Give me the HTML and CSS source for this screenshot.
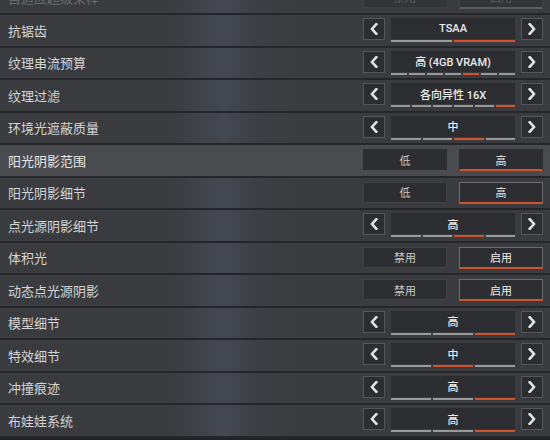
FILE: index.html
```html
<!DOCTYPE html>
<html lang="zh-CN">
<head>
  <meta charset="UTF-8" />
  <meta name="viewport" content="width=device-width, initial-scale=1.0"/>
  <title>视频设置</title>
  <link rel="stylesheet" href="styles.css">
</head>
<body>

<div class="settings">

  <div class="row disabled">
    <div class="label">自适应超级采样</div>
    <div class="toggle">
      <div class="opt">禁用</div>
      <div class="opt on">启用</div>
    </div>
  </div>

  <div class="row">
    <div class="label">抗锯齿</div>
    <div class="picker">
      <div class="arrow"><svg viewBox="0 0 8 12" width="8" height="12"><path d="M6.3 1.2 L2 6 L6.3 10.8"/></svg></div>
      <div class="value">
        <div class="value-text">TSAA</div>
        <div class="ticks"><span></span><span class="on"></span></div>
      </div>
      <div class="arrow"><svg viewBox="0 0 8 12" width="8" height="12"><path d="M1.7 1.2 L6 6 L1.7 10.8"/></svg></div>
    </div>
  </div>

  <div class="row">
    <div class="label">纹理串流预算</div>
    <div class="picker">
      <div class="arrow"><svg viewBox="0 0 8 12" width="8" height="12"><path d="M6.3 1.2 L2 6 L6.3 10.8"/></svg></div>
      <div class="value">
        <div class="value-text">高 (4GB VRAM)</div>
        <div class="ticks"><span></span><span></span><span></span><span></span><span class="on"></span><span></span><span></span></div>
      </div>
      <div class="arrow"><svg viewBox="0 0 8 12" width="8" height="12"><path d="M1.7 1.2 L6 6 L1.7 10.8"/></svg></div>
    </div>
  </div>

  <div class="row">
    <div class="label">纹理过滤</div>
    <div class="picker">
      <div class="arrow"><svg viewBox="0 0 8 12" width="8" height="12"><path d="M6.3 1.2 L2 6 L6.3 10.8"/></svg></div>
      <div class="value">
        <div class="value-text">各向异性 16X</div>
        <div class="ticks"><span></span><span></span><span></span><span></span><span></span><span class="on"></span></div>
      </div>
      <div class="arrow"><svg viewBox="0 0 8 12" width="8" height="12"><path d="M1.7 1.2 L6 6 L1.7 10.8"/></svg></div>
    </div>
  </div>

  <div class="row">
    <div class="label">环境光遮蔽质量</div>
    <div class="picker">
      <div class="arrow"><svg viewBox="0 0 8 12" width="8" height="12"><path d="M6.3 1.2 L2 6 L6.3 10.8"/></svg></div>
      <div class="value">
        <div class="value-text">中</div>
        <div class="ticks"><span></span><span></span><span class="on"></span><span></span></div>
      </div>
      <div class="arrow"><svg viewBox="0 0 8 12" width="8" height="12"><path d="M1.7 1.2 L6 6 L1.7 10.8"/></svg></div>
    </div>
  </div>

  <div class="row active">
    <div class="label">阳光阴影范围</div>
    <div class="toggle">
      <div class="opt">低</div>
      <div class="opt on">高</div>
    </div>
  </div>

  <div class="row">
    <div class="label">阳光阴影细节</div>
    <div class="toggle">
      <div class="opt">低</div>
      <div class="opt on">高</div>
    </div>
  </div>

  <div class="row">
    <div class="label">点光源阴影细节</div>
    <div class="picker">
      <div class="arrow"><svg viewBox="0 0 8 12" width="8" height="12"><path d="M6.3 1.2 L2 6 L6.3 10.8"/></svg></div>
      <div class="value">
        <div class="value-text">高</div>
        <div class="ticks"><span></span><span></span><span class="on"></span><span></span></div>
      </div>
      <div class="arrow"><svg viewBox="0 0 8 12" width="8" height="12"><path d="M1.7 1.2 L6 6 L1.7 10.8"/></svg></div>
    </div>
  </div>

  <div class="row">
    <div class="label">体积光</div>
    <div class="toggle">
      <div class="opt">禁用</div>
      <div class="opt on">启用</div>
    </div>
  </div>

  <div class="row">
    <div class="label">动态点光源阴影</div>
    <div class="toggle">
      <div class="opt">禁用</div>
      <div class="opt on">启用</div>
    </div>
  </div>

  <div class="row">
    <div class="label">模型细节</div>
    <div class="picker">
      <div class="arrow"><svg viewBox="0 0 8 12" width="8" height="12"><path d="M6.3 1.2 L2 6 L6.3 10.8"/></svg></div>
      <div class="value">
        <div class="value-text">高</div>
        <div class="ticks"><span></span><span></span><span class="on"></span></div>
      </div>
      <div class="arrow"><svg viewBox="0 0 8 12" width="8" height="12"><path d="M1.7 1.2 L6 6 L1.7 10.8"/></svg></div>
    </div>
  </div>

  <div class="row">
    <div class="label">特效细节</div>
    <div class="picker">
      <div class="arrow"><svg viewBox="0 0 8 12" width="8" height="12"><path d="M6.3 1.2 L2 6 L6.3 10.8"/></svg></div>
      <div class="value">
        <div class="value-text">中</div>
        <div class="ticks"><span></span><span class="on"></span><span></span></div>
      </div>
      <div class="arrow"><svg viewBox="0 0 8 12" width="8" height="12"><path d="M1.7 1.2 L6 6 L1.7 10.8"/></svg></div>
    </div>
  </div>

  <div class="row">
    <div class="label">冲撞痕迹</div>
    <div class="picker">
      <div class="arrow"><svg viewBox="0 0 8 12" width="8" height="12"><path d="M6.3 1.2 L2 6 L6.3 10.8"/></svg></div>
      <div class="value">
        <div class="value-text">高</div>
        <div class="ticks"><span></span><span></span><span class="on"></span></div>
      </div>
      <div class="arrow"><svg viewBox="0 0 8 12" width="8" height="12"><path d="M1.7 1.2 L6 6 L1.7 10.8"/></svg></div>
    </div>
  </div>

  <div class="row">
    <div class="label">布娃娃系统</div>
    <div class="picker">
      <div class="arrow"><svg viewBox="0 0 8 12" width="8" height="12"><path d="M6.3 1.2 L2 6 L6.3 10.8"/></svg></div>
      <div class="value">
        <div class="value-text">高</div>
        <div class="ticks"><span></span><span></span><span class="on"></span></div>
      </div>
      <div class="arrow"><svg viewBox="0 0 8 12" width="8" height="12"><path d="M1.7 1.2 L6 6 L1.7 10.8"/></svg></div>
    </div>
  </div>

</div>

</body>
</html>
```

FILE: styles.css
```css
body {
  margin: 0;
  padding: 0;
  background: #232428;
  font-family: "Noto Sans CJK SC", "Noto Sans", sans-serif;
  color: #d6d6d6;
  overflow: hidden;
}

.settings {
  margin-top: -17.5px;
}

.row {
  display: flex;
  align-items: center;
  height: 30.5px;
  padding: 0 7px 0 8px;
  border-bottom: 2px solid #25262a;
  background: linear-gradient(90deg, #3a3b3f 0, #3a3b3f 170px, #41444b 205px, #444852 225px, #3d3f44 255px, #3a3b3f 300px, #3a3b3f 100%);
}

.row.active {
  background: #4a4b4f;
}

.label {
  flex: 1;
  font-size: 13px;
  color: #d4d4d4;
}

.row.active .label {
  color: #e6e6e6;
}

.row.disabled .label {
  color: #6a6b6e;
}

/* arrow pickers */
.picker {
  display: flex;
  align-items: flex-start;
  gap: 6px;
  width: 180px;
  height: 24px;
}

.arrow {
  width: 20px;
  height: 20px;
  border: 1px solid #55565a;
  background: #2c2d31;
  display: flex;
  align-items: center;
  justify-content: center;
}

.arrow path {
  fill: none;
  stroke: #e4e4e4;
  stroke-width: 2.6;
  stroke-linecap: square;
  stroke-linejoin: miter;
}

.value {
  width: 124px;
  display: flex;
  flex-direction: column;
}

.value-text {
  height: 21px;
  background: #2c2d31;
  font-family: "Roboto", "Noto Sans CJK SC", sans-serif;
  font-size: 11px;
  font-weight: 500;
  color: #ececec;
  display: flex;
  align-items: center;
  justify-content: center;
}

.ticks {
  display: flex;
  gap: 2px;
  margin-top: 1px;
}

.ticks span {
  flex: 1;
  height: 2px;
  background: #9a9a9a;
}

.ticks span.on {
  background: #d5512b;
}

/* two-way toggles */
.toggle {
  display: flex;
  gap: 12px;
  width: 180px;
  height: 22px;
}

.opt {
  flex: 1;
  box-sizing: border-box;
  height: 21px;
  border: 1px solid #3f4044;
  background: #2d2e32;
  font-size: 11px;
  color: #c8c8c8;
  display: flex;
  align-items: center;
  justify-content: center;
}

.opt.on {
  height: 22px;
  border: 1px solid #6b6c70;
  border-bottom: 2px solid #d5512b;
  color: #ececec;
}

.row.active .opt {
  border-color: #2d2e32;
}

.row.active .opt.on {
  border-color: #2d2e32;
  border-bottom-color: #d5512b;
}

.row.disabled .opt {
  color: #5e5f62;
  border-color: #3c3d41;
  background: #333438;
}

.row.disabled .opt.on {
  border-color: #3c3d41;
  border-bottom: 2px solid #5a5b5e;
}
```
